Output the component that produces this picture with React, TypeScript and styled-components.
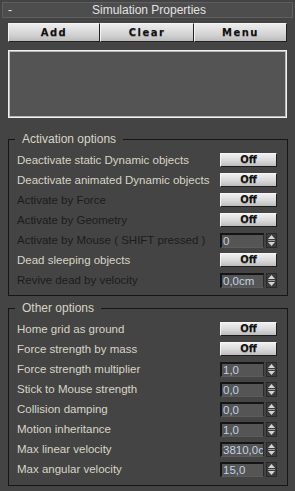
import styled, { createGlobalStyle } from "styled-components";

const GlobalStyle = createGlobalStyle`
  html, body {
    margin: 0;
    padding: 0;
    background: #444444;
  }
  body {
    font-family: "Liberation Sans", Arial, sans-serif;
    font-size: 11px;
  }
`;

const Panel = styled.div`
  width: 295px;
  height: 491px;
  background: #444444;
  padding-top: 2px;
  box-sizing: border-box;
  overflow: hidden;
`;

const Header = styled.div`
  margin: 0 2px;
  height: 14px;
  background: #4d4d4d;
  border: 1px solid #5e5e5e;
  display: flex;
  align-items: center;
  color: #e2e2e2;
  font-size: 12px;
`;

const Collapse = styled.span`
  width: 20px;
  padding-left: 5px;
  color: #e8e8e8;
`;

const Title = styled.span`
  flex: 1;
  text-align: center;
  padding-right: 22px;
`;

const ButtonRow = styled.div`
  margin: 5px 8px 0 8px;
  display: grid;
  grid-template-columns: 92px 94px 93px;
  height: 19px;
`;

const ToolButton = styled.button`
  font-family: "DejaVu Sans", Verdana, sans-serif;
  font-size: 10px;
  font-weight: bold;
  letter-spacing: 1.5px;
  color: #111;
  background: linear-gradient(#ececec, #d4d4d4 60%, #bcbcbc);
  border: 1px solid #222;
  border-top-color: #f4f4f4;
  border-left-color: #f4f4f4;
  padding: 0;
  margin: 0;
  text-shadow: 0 1px 0 #9a9a9a;
`;

const ListBox = styled.div`
  margin: 8px 8px 0 8px;
  height: 68px;
  box-sizing: border-box;
  background: #545454;
  border: 1px solid #f2f2f2;
  box-shadow: inset 0 0 0 1px #b8b8b8;
`;

const Group = styled.fieldset<{ $top: number; $bottom: number }>`
  margin: ${(p) => p.$top}px 7px 0 8px;
  padding: 4px 10px ${(p) => p.$bottom}px 8px;
  border: 1px solid #161616;
  min-width: 0;
`;

const Legend = styled.legend`
  margin-left: -2px;
  padding: 0 7px;
  font-size: 12px;
  line-height: 14px;
  color: #d8d4c4;
`;

const Row = styled.div`
  height: 20px;
  display: flex;
  align-items: center;
  justify-content: space-between;
`;

const Label = styled.span<{ $disabled?: boolean }>`
  color: ${(p) => (p.$disabled ? "#1c1c1c" : "#d8d4c4")};
  font-size: 11.5px;
  white-space: nowrap;
`;

const Toggle = styled.button`
  width: 57px;
  height: 14px;
  padding: 0;
  margin: 0;
  box-sizing: border-box;
  font-family: "DejaVu Sans", Verdana, sans-serif;
  font-size: 10px;
  font-weight: bold;
  color: #111;
  line-height: 12px;
  background: linear-gradient(#efefef, #d6d6d6 60%, #bdbdbd);
  border: 1px solid #1e1e1e;
  border-top-color: #f6f6f6;
  border-left-color: #f6f6f6;
  text-shadow: 0 1px 0 #a0a0a0;
`;

const Spinner = styled.div`
  width: 57px;
  height: 15px;
  display: flex;
  gap: 2px;
`;

const Field = styled.div`
  width: 44px;
  box-sizing: border-box;
  background: #555555;
  border-top: 2px solid #151515;
  border-left: 2px solid #151515;
  border-right: 1px solid #2a2a2a;
  border-bottom: 1px solid #5c5c5c;
  color: #c0d2e4;
  font-size: 11.5px;
  line-height: 12px;
  padding-left: 1px;
  white-space: nowrap;
  overflow: hidden;
`;

const Arrows = styled.div`
  width: 11px;
  box-sizing: border-box;
  background: #3c3c3c;
  border: 1px solid #2a2a2a;
  display: flex;
  flex-direction: column;
  align-items: center;
  justify-content: space-between;
  padding: 1px 0;
`;

const Divider = styled.div`
  width: 7px;
  height: 1px;
  background: #9a9a9a;
`;

const SpinArrows = () => (
  <Arrows>
    <svg width="7" height="4" viewBox="0 0 7 4">
      <path d="M3.5 0 L7 4 L0 4 Z" fill="#d4d4d4" />
    </svg>
    <Divider />
    <svg width="7" height="4" viewBox="0 0 7 4">
      <path d="M0 0 L7 0 L3.5 4 Z" fill="#d4d4d4" />
    </svg>
  </Arrows>
);

type Item = {
  label: string;
  disabled?: boolean;
  toggle?: string;
  value?: string;
};

const activation: Item[] = [
  { label: "Deactivate static Dynamic objects", toggle: "Off" },
  { label: "Deactivate animated Dynamic objects", toggle: "Off" },
  { label: "Activate by Force", disabled: true, toggle: "Off" },
  { label: "Activate by Geometry", disabled: true, toggle: "Off" },
  { label: "Activate by Mouse ( SHIFT pressed )", disabled: true, value: "0" },
  { label: "Dead sleeping objects", toggle: "Off" },
  { label: "Revive dead by velocity", disabled: true, value: "0,0cm" },
];

const other: Item[] = [
  { label: "Home grid as ground", toggle: "Off" },
  { label: "Force strength by mass", toggle: "Off" },
  { label: "Force strength multiplier", value: "1,0" },
  { label: "Stick to Mouse strength", value: "0,0" },
  { label: "Collision damping", value: "0,0" },
  { label: "Motion inheritance", value: "1,0" },
  { label: "Max linear velocity", value: "3810,0cm" },
  { label: "Max angular velocity", value: "15,0" },
];

const Rows = ({ items }: { items: Item[] }) => (
  <>
    {items.map((it) => (
      <Row key={it.label}>
        <Label $disabled={it.disabled}>{it.label}</Label>
        {it.toggle ? (
          <Toggle>{it.toggle}</Toggle>
        ) : (
          <Spinner>
            <Field>{it.value}</Field>
            <SpinArrows />
          </Spinner>
        )}
      </Row>
    ))}
  </>
);

export default function App() {
  return (
    <Panel>
      <GlobalStyle />
      <Header>
        <Collapse>-</Collapse>
        <Title>Simulation Properties</Title>
      </Header>
      <ButtonRow>
        <ToolButton>Add</ToolButton>
        <ToolButton>Clear</ToolButton>
        <ToolButton>Menu</ToolButton>
      </ButtonRow>
      <ListBox />
      <Group $top={14} $bottom={5}>
        <Legend>Activation options</Legend>
        <Rows items={activation} />
      </Group>
      <Group $top={5} $bottom={6}>
        <Legend>Other options</Legend>
        <Rows items={other} />
      </Group>
    </Panel>
  );
}
